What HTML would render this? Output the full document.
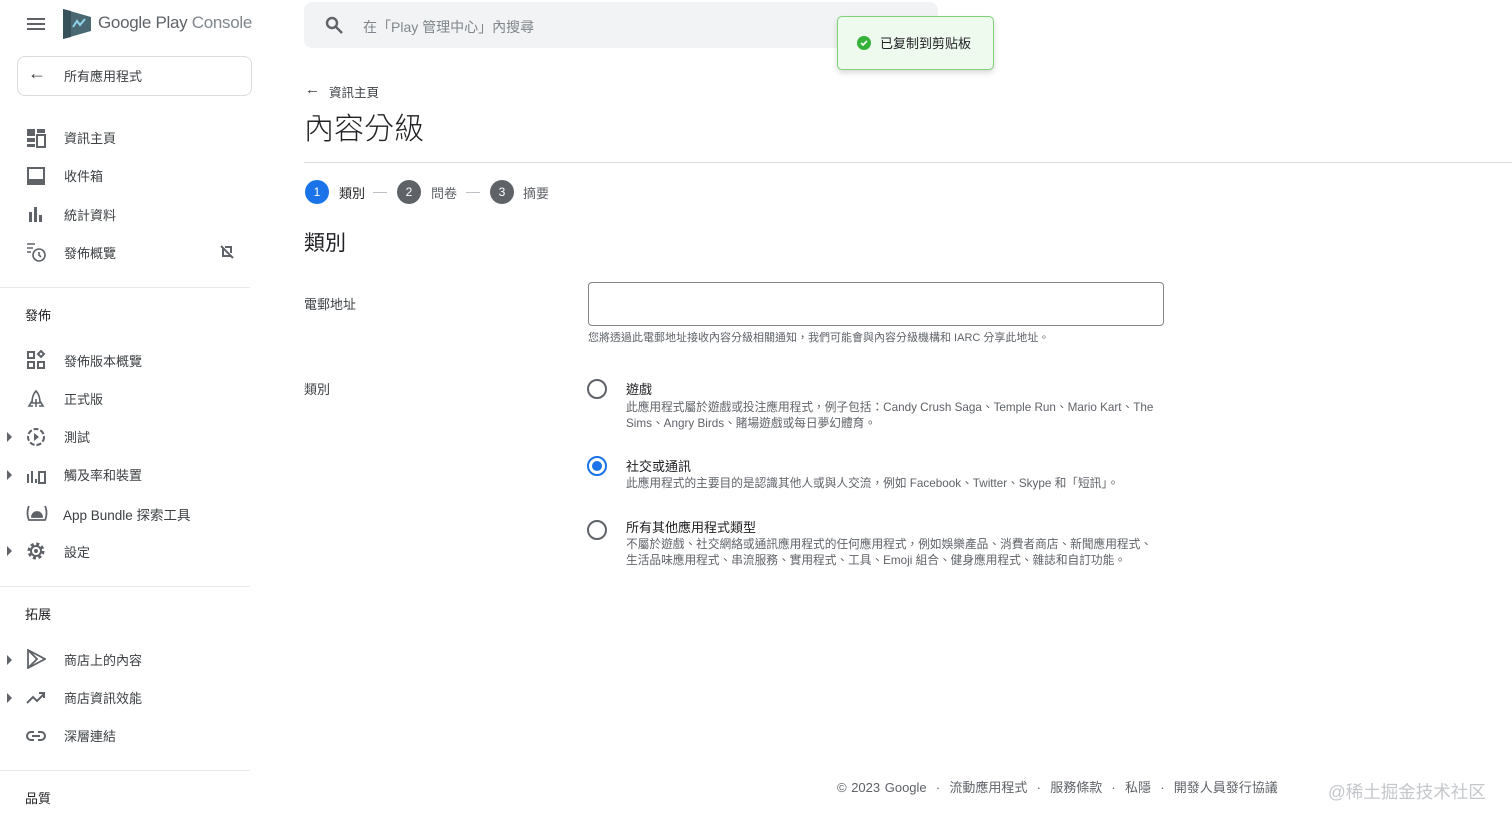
<!DOCTYPE html>
<html><head><meta charset="utf-8"><style>
*{margin:0;padding:0;box-sizing:border-box}
body{width:1512px;height:824px;overflow:hidden;background:#fff;font-family:"Liberation Sans","Noto Sans CJK TC",sans-serif;color:#202124;position:relative}
.a{position:absolute;white-space:nowrap}
.nav{font-size:13px;color:#3c4043;margin-top:-2px}
.ic{position:absolute;left:26px;width:20px;height:20px}
.tri{position:absolute;left:7px;width:0;height:0;border-top:5px solid transparent;border-bottom:5px solid transparent;border-left:5px solid #5f6368}
.hr{position:absolute;left:0;width:250px;height:1px;background:#e8eaed}
.sec{font-size:13px;color:#202124;left:25px;margin-top:-2px}
.radio{position:absolute;left:587px;width:20px;height:20px;border:2px solid #5f6368;border-radius:50%}
.rt{font-size:13px;color:#202124;left:626px;margin-top:-2px}
.rd{font-size:11.7px;color:#5f6368;left:626px;line-height:15.5px}
</style></head><body>
<!-- header -->
<div class="a" style="left:27px;top:18px;width:18px;height:2px;background:#5f6368;box-shadow:0 5px 0 #5f6368,0 10px 0 #5f6368"></div>
<svg class="a" style="left:63px;top:9px" width="28" height="30" viewBox="0 0 28 30"><path d="M0 0 L28 8 L28 22 L0 30Z" fill="#4a6872"/><path d="M0 0 L8 2 L8 28 L0 30Z" fill="#37525b"/><path d="M10 18 L14 12 L17 16 L22 10" stroke="#8fd3e8" stroke-width="2" fill="none"/></svg>
<div class="a" style="left:98px;top:13px;font-size:17px;color:#5f6368;letter-spacing:-0.3px">Google Play <span style="color:#80868b">Console</span></div>
<div class="a" style="left:17px;top:56px;width:235px;height:40px;border:1px solid #dadce0;border-radius:8px"></div>
<div class="a" style="left:28px;top:63px;font-size:18px;color:#3c4043">←</div>
<div class="a nav" style="left:64px;top:68px">所有應用程式</div>

<svg class="ic" style="top:128px" viewBox="0 0 20 20" fill="#5f6368"><rect x="1" y="1" width="8" height="7"/><rect x="11" y="1" width="8" height="4"/><rect x="1" y="10" width="8" height="4"/><rect x="1" y="16" width="8" height="3"/><rect x="11" y="7" width="8" height="12" fill="none" stroke="#5f6368" stroke-width="2"/></svg>
<div class="a nav" style="left:64px;top:130px">資訊主頁</div>
<svg class="ic" style="top:166px" viewBox="0 0 20 20"><rect x="2" y="2" width="16" height="16" fill="none" stroke="#5f6368" stroke-width="2"/><rect x="2" y="13" width="16" height="5" fill="#5f6368"/></svg>
<div class="a nav" style="left:64px;top:168px">收件箱</div>
<svg class="ic" style="top:204px" viewBox="0 0 20 20" fill="#5f6368"><rect x="3" y="8" width="3" height="10"/><rect x="8" y="3" width="3" height="15"/><rect x="13" y="11" width="3" height="7"/></svg>
<div class="a nav" style="left:64px;top:207px">統計資料</div>
<svg class="ic" style="top:242px" viewBox="0 0 20 20" fill="none" stroke="#5f6368" stroke-width="1.6"><path d="M1 2h8M1 6h6M1 10h4"/><circle cx="13" cy="13" r="6"/><path d="M13 10v3l2 2"/></svg>
<div class="a nav" style="left:64px;top:245px">發佈概覽</div>
<svg class="a" style="left:219px;top:244px" width="16" height="16" viewBox="0 0 16 16" fill="none" stroke="#5f6368" stroke-width="2"><path d="M2 2l12 12M4 4v8h8M6 3h6v6"/></svg>
<div class="hr" style="top:287px"></div>
<div class="a sec" style="top:307px">發佈</div>
<svg class="ic" style="top:350px" viewBox="0 0 20 20" fill="none" stroke="#5f6368" stroke-width="2"><rect x="2" y="2" width="6" height="6"/><rect x="2" y="12" width="6" height="6"/><rect x="12" y="12" width="6" height="6"/><path d="M15 1l3 3-3 3-3-3z"/></svg>
<div class="a nav" style="left:64px;top:353px">發佈版本概覽</div>
<svg class="ic" style="top:389px" viewBox="0 0 20 20" fill="none" stroke="#5f6368" stroke-width="1.6"><path d="M10 2c-3 3-4 7-4 12h8c0-5-1-9-4-12zM6 12l-3 5h4M14 12l3 5h-4M10 10v8"/></svg>
<div class="a nav" style="left:64px;top:391px">正式版</div>
<div class="tri" style="top:432px"></div>
<svg class="ic" style="top:427px" viewBox="0 0 20 20"><circle cx="10" cy="10" r="8" fill="none" stroke="#5f6368" stroke-width="2" stroke-dasharray="5 2"/><path d="M8 6l5 4-5 4z" fill="#5f6368"/></svg>
<div class="a nav" style="left:64px;top:429px">測試</div>
<div class="tri" style="top:470px"></div>
<svg class="ic" style="top:465px" viewBox="0 0 20 20" fill="#5f6368"><rect x="1" y="9" width="2" height="9"/><rect x="5" y="6" width="2" height="12"/><rect x="9" y="14" width="2" height="4"/><rect x="13" y="7" width="6" height="11" fill="none" stroke="#5f6368" stroke-width="2"/></svg>
<div class="a nav" style="left:64px;top:467px">觸及率和裝置</div>
<svg class="ic" style="top:503px;width:22px" viewBox="0 0 22 20" fill="none" stroke="#5f6368" stroke-width="1.8"><path d="M3 3c-2 4-2 10 0 14h16c2-4 2-10 0-14"/><path d="M6 14a5 5 0 0 1 10 0z" fill="#5f6368"/></svg>
<div class="a nav" style="left:63px;top:506px;font-size:13.5px">App Bundle 探索工具</div>
<div class="tri" style="top:546px"></div>
<svg class="ic" style="top:541px" viewBox="0 0 20 20"><circle cx="10" cy="10" r="7" fill="none" stroke="#5f6368" stroke-width="3" stroke-dasharray="3 2.5"/><circle cx="10" cy="10" r="5" fill="none" stroke="#5f6368" stroke-width="2"/><circle cx="10" cy="10" r="2" fill="#5f6368"/></svg>
<div class="a nav" style="left:64px;top:544px">設定</div>
<div class="hr" style="top:586px"></div>
<div class="a sec" style="top:606px">拓展</div>
<div class="tri" style="top:655px"></div>
<svg class="ic" style="top:649px" viewBox="0 0 20 20" fill="none" stroke="#5f6368" stroke-width="1.8"><path d="M2 1v18l17-9z M2 1l9 9-9 9"/></svg>
<div class="a nav" style="left:64px;top:652px">商店上的內容</div>
<div class="tri" style="top:693px"></div>
<svg class="ic" style="top:688px" viewBox="0 0 20 20" fill="none" stroke="#5f6368" stroke-width="2"><path d="M1 15l6-6 4 4 7-7M13 5h5v5"/></svg>
<div class="a nav" style="left:64px;top:690px">商店資訊效能</div>
<svg class="ic" style="top:726px" viewBox="0 0 20 20" fill="none" stroke="#5f6368" stroke-width="2"><path d="M8 6H5a4 4 0 0 0 0 8h3M12 6h3a4 4 0 0 1 0 8h-3M6 10h8"/></svg>
<div class="a nav" style="left:64px;top:728px">深層連結</div>
<div class="hr" style="top:770px"></div>
<div class="a sec" style="top:790px">品質</div>

<!-- search -->
<div class="a" style="left:304px;top:2px;width:634px;height:46px;background:#f1f3f4;border-radius:8px"></div>
<svg class="a" style="left:325px;top:16px" width="18" height="18" viewBox="0 0 18 18" fill="none" stroke="#5f6368" stroke-width="2.4"><circle cx="7" cy="7" r="5"/><path d="M11 11l6 6"/></svg>
<div class="a" style="left:363px;top:17px;font-size:14px;color:#80868b">在「Play 管理中心」內搜尋</div>
<div class="a" style="left:837px;top:16px;width:157px;height:54px;background:#effaee;border:1px solid #7fd276;border-radius:5px;box-shadow:0 3px 6px rgba(0,0,0,.15)"></div>
<svg class="a" style="left:857px;top:36px" width="14" height="14" viewBox="0 0 14 14"><circle cx="7" cy="7" r="7" fill="#34b23a"/><path d="M4 7l2 2 4-4" stroke="#fff" stroke-width="1.6" fill="none"/></svg>
<div class="a" style="left:880px;top:33px;font-size:13px;color:#202124">已复制到剪贴板</div>

<!-- content -->
<div class="a" style="left:305px;top:81px;font-size:15px;color:#3c4043">←</div>
<div class="a" style="left:329px;top:82px;font-size:12.5px;color:#3c4043">資訊主頁</div>
<div class="a" style="left:304px;top:104px;font-size:30px;color:#202124;font-weight:300">內容分級</div>
<div class="a" style="left:304px;top:162px;width:1208px;height:1px;background:#dadce0"></div>
<div class="a" style="left:305px;top:180px;width:24px;height:24px;border-radius:50%;background:#1a73e8;color:#fff;font-size:12px;text-align:center;line-height:24px">1</div>
<div class="a" style="left:339px;top:183px;font-size:13px">類別</div>
<div class="a" style="left:373px;top:192px;width:14px;height:1px;background:#bdc1c6"></div>
<div class="a" style="left:397px;top:180px;width:24px;height:24px;border-radius:50%;background:#5f6368;color:#fff;font-size:12px;text-align:center;line-height:24px">2</div>
<div class="a" style="left:431px;top:183px;font-size:13px;color:#5f6368">問卷</div>
<div class="a" style="left:466px;top:192px;width:14px;height:1px;background:#bdc1c6"></div>
<div class="a" style="left:490px;top:180px;width:24px;height:24px;border-radius:50%;background:#5f6368;color:#fff;font-size:12px;text-align:center;line-height:24px">3</div>
<div class="a" style="left:523px;top:183px;font-size:13px;color:#5f6368">摘要</div>
<div class="a" style="left:304px;top:227px;font-size:21px;color:#202124">類別</div>

<div class="a" style="left:304px;top:294px;font-size:13px;color:#3c4043">電郵地址</div>
<div class="a" style="left:588px;top:282px;width:576px;height:44px;border:1px solid #80868b;border-radius:4px"></div>
<div class="a" style="left:588px;top:329px;font-size:11px;color:#5f6368">您將透過此電郵地址接收內容分級相關通知，我們可能會與內容分級機構和 IARC 分享此地址。</div>
<div class="a" style="left:304px;top:379px;font-size:13px;color:#3c4043">類別</div>

<div class="radio" style="top:379px"></div>
<div class="a rt" style="top:381px">遊戲</div>
<div class="a rd" style="top:400px">此應用程式屬於遊戲或投注應用程式，例子包括：Candy Crush Saga、Temple Run、Mario Kart、The<br>Sims、Angry Birds、賭場遊戲或每日夢幻體育。</div>
<div class="radio" style="top:456px;border-color:#1a73e8"><div style="position:absolute;left:3px;top:3px;width:10px;height:10px;border-radius:50%;background:#1a73e8"></div></div>
<div class="a rt" style="top:458px">社交或通訊</div>
<div class="a rd" style="top:476px">此應用程式的主要目的是認識其他人或與人交流，例如 Facebook、Twitter、Skype 和「短訊」。</div>
<div class="radio" style="top:520px"></div>
<div class="a rt" style="top:519px">所有其他應用程式類型</div>
<div class="a rd" style="top:537px">不屬於遊戲、社交網絡或通訊應用程式的任何應用程式，例如娛樂產品、消費者商店、新聞應用程式、<br>生活品味應用程式、串流服務、實用程式、工具、Emoji 組合、健身應用程式、雜誌和自訂功能。</div>

<div class="a" style="left:837px;top:777px;font-size:13px;color:#5f6368;word-spacing:1px">© 2023 Google &nbsp;·&nbsp; 流動應用程式 &nbsp;·&nbsp; 服務條款 &nbsp;·&nbsp; 私隱 &nbsp;·&nbsp; 開發人員發行協議</div>
<div class="a" style="left:1328px;top:779px;font-size:17.5px;color:#c4c7cb">@稀土掘金技术社区</div>
</body></html>
